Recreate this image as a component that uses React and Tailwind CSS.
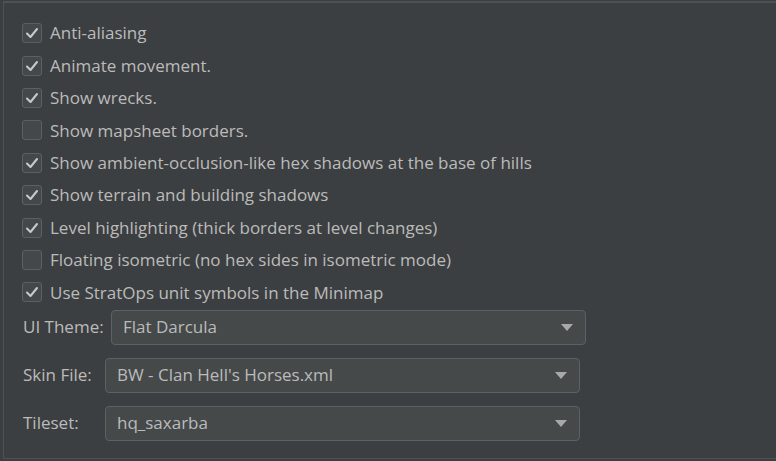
const checks = [
  ['Anti-aliasing', true],
  ['Animate movement.', true],
  ['Show wrecks.', true],
  ['Show mapsheet borders.', false],
  ['Show ambient-occlusion-like hex shadows at the base of hills', true],
  ['Show terrain and building shadows', true],
  ['Level highlighting (thick borders at level changes)', true],
  ['Floating isometric (no hex sides in isometric mode)', false],
  ['Use StratOps unit symbols in the Minimap', true],
];

function Check({ label, on }) {
  return (
    <div className="flex items-center h-[32.4px]">
      <div className="w-[20px] h-[20px] ml-[22px] rounded-[3px] border border-[#5d6062] bg-[#43494a] flex items-center justify-center">
        {on && (
          <svg width="14" height="12" viewBox="0 0 14 12">
            <path d="M2 6.5 L5.5 10 L12 2" fill="none" stroke="#c9c9c9" strokeWidth="2" strokeLinecap="round" strokeLinejoin="round" />
          </svg>
        )}
      </div>
      <span className="ml-[8px]">{label}</span>
    </div>
  );
}

function Combo({ label, value, labelW, comboW }) {
  return (
    <div className="flex items-center h-[35px]">
      <span className="ml-[23px]" style={{ width: labelW }}>{label}</span>
      <div className="h-[35px] rounded-[4px] border border-[#5e6062] bg-[#45494a] flex items-center justify-between pl-[11px] pr-[12px]" style={{ width: comboW }}>
        <span>{value}</span>
        <svg width="12" height="7" viewBox="0 0 12 7">
          <path d="M0 0 H12 L6 7 Z" fill="#a9a9a9" />
        </svg>
      </div>
    </div>
  );
}

export default function App() {
  return (
    <div className="w-[776px] h-[461px] bg-[#3c3f41] pt-[1px] overflow-hidden">
      <div
        className="ml-[3px] h-[458px] border-t-2 border-l border-b border-[#4f5254] text-[#bbbbbb] text-[17px] pt-[14px]"
        style={{ fontFamily: '"Open Sans", "Noto Sans", sans-serif' }}
      >
        <div className="flex flex-col -ml-[4px]">
          {checks.map(([l, on]) => (
            <Check key={l} label={l} on={on} />
          ))}
        </div>
        <div className="flex flex-col gap-[13px] mt-[1px] -ml-[4px]">
          <Combo label="UI Theme:" value="Flat Darcula" labelW={88} comboW={475} />
          <Combo label="Skin File:" value="BW - Clan Hell's Horses.xml" labelW={82} comboW={475} />
          <Combo label="Tileset:" value="hq_saxarba" labelW={82} comboW={475} />
        </div>
      </div>
    </div>
  );
}
